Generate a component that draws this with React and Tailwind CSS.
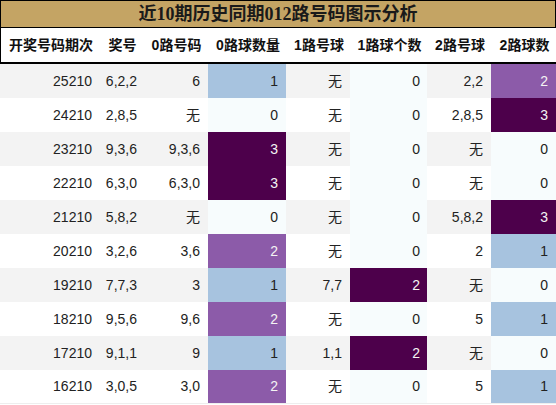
const rows = [
  ["25210", "6,2,2", "6", 1, "无", 0, "2,2", 2],
  ["24210", "2,8,5", "无", 0, "无", 0, "2,8,5", 3],
  ["23210", "9,3,6", "9,3,6", 3, "无", 0, "无", 0],
  ["22210", "6,3,0", "6,3,0", 3, "无", 0, "无", 0],
  ["21210", "5,8,2", "无", 0, "无", 0, "5,8,2", 3],
  ["20210", "3,2,6", "3,6", 2, "无", 0, "2", 1],
  ["19210", "7,7,3", "3", 1, "7,7", 2, "无", 0],
  ["18210", "9,5,6", "9,6", 2, "无", 0, "5", 1],
  ["17210", "9,1,1", "9", 1, "1,1", 2, "无", 0],
  ["16210", "3,0,5", "3,0", 2, "无", 0, "5", 1],
];

const headers = ["开奖号码期次", "奖号", "0路号码", "0路球数量", "1路号球", "1路球个数", "2路号球", "2路球数"];

const scale = {
  0: "bg-[#f7fcfd] text-[#222]",
  1: "bg-[#a7c3df] text-[#222]",
  2: "bg-[#8c5ba9] text-[#f4f4f4]",
  3: "bg-[#4d004b] text-[#f4f4f4]",
};

const scale6 = {
  0: "bg-[#f7fcfd] text-[#222]",
  2: "bg-[#4d004b] text-[#f4f4f4]",
};

const grid = "grid grid-cols-[100px_43px_65px_78px_64px_77px_64px_65px]";

export default function App() {
  return (
    <div className="w-[556px] h-[405px] bg-white overflow-hidden" style={{ fontFamily: '"Liberation Sans", "Noto Sans CJK SC", sans-serif' }}>
      <div
        className="h-[28px] border border-black bg-[#c4a464] flex items-center justify-center text-[18px] font-bold text-[#1a1a1a]"
        style={{ fontFamily: '"Liberation Serif", "Noto Sans CJK SC", serif' }}
      >
        近10期历史同期012路号码图示分析
      </div>
      <div className={`${grid} h-[36px] border-l border-black border-b-2 border-b-black`}>
        {headers.map((h, i) => (
          <div key={i} className="flex items-center justify-center text-[14px] font-bold text-[#111]">
            {h}
          </div>
        ))}
      </div>
      {rows.map((r, ri) => {
        const stripe = ri % 2 === 0 ? "bg-[#f3f3f3]" : "bg-white";
        return (
          <div key={ri} className={`${grid} h-[34px] text-[14px] text-[#222] ${ri === rows.length - 1 ? "border-b border-[#eeeeee]" : ""}`}>
            <div className={`${stripe} flex items-center justify-end pr-[8px]`}>{r[0]}</div>
            <div className={`${stripe} flex items-center justify-end pr-[6px]`}>{r[1]}</div>
            <div className={`${stripe} flex items-center justify-end pr-[8px]`}>{r[2]}</div>
            <div className={`${scale[r[3]]} flex items-center justify-end pr-[8px]`}>{r[3]}</div>
            <div className={`${stripe} flex items-center justify-end pr-[8px]`}>{r[4]}</div>
            <div className={`${scale6[r[5]]} flex items-center justify-end pr-[7px]`}>{r[5]}</div>
            <div className={`${stripe} flex items-center justify-end pr-[8px]`}>{r[6]}</div>
            <div className={`${scale[r[7]]} flex items-center justify-end pr-[8px]`}>{r[7]}</div>
          </div>
        );
      })}
    </div>
  );
}
